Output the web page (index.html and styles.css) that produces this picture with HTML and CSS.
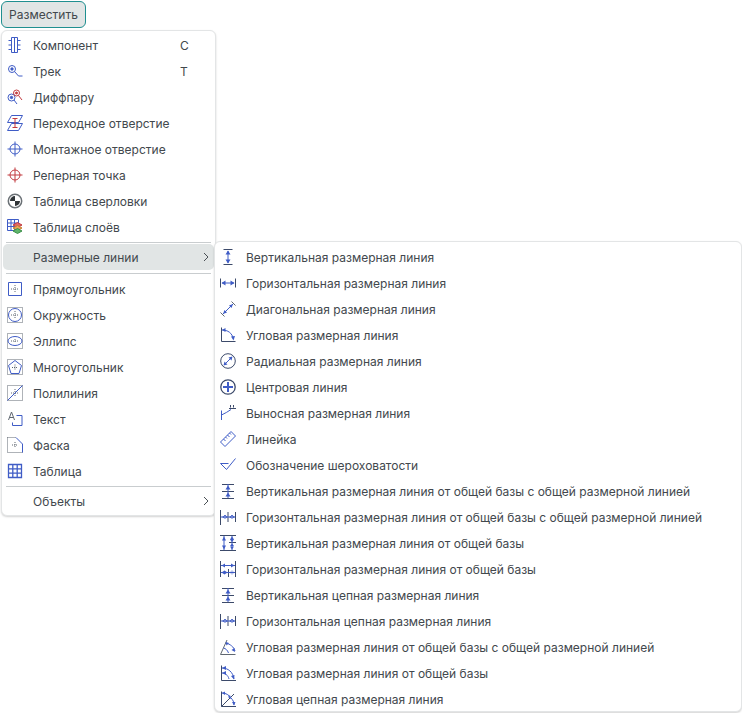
FILE: index.html
```html
<!DOCTYPE html>
<html lang="ru">
<head>
    <meta charset="UTF-8">
    <title>Разместить</title>
    <link rel="stylesheet" href="styles.css">
</head>
<body>

    <button class="menu-button">Разместить</button>

    <div class="menu">
        <div class="menu-item">
            <svg class="icon" viewBox="0 0 16 16"><path d="M4.500 .5h6v15h-6zM4.500 3.500h-3M4.500 8h-3M4.500 12.500h-3M10.500 3.500h3M10.500 8h3M10.500 12.500h3M7.500 .5v15"/></svg>
            <span class="label">Компонент</span><span class="shortcut">C</span>
        </div>
        <div class="menu-item">
            <svg class="icon" viewBox="0 0 16 16"><circle cx="5" cy="6" r="3.500"/><circle class="fill" cx="5" cy="6" r="1.200"/><path d="M7.500 8.500l4 4.500h4"/></svg>
            <span class="label">Трек</span><span class="shortcut">T</span>
        </div>
        <div class="menu-item">
            <svg class="icon" viewBox="0 0 16 16"><circle cx="4.500" cy="8.500" r="3.500"/><circle class="fill" cx="4.500" cy="8.500" r="1.200"/><path d="M7 11l3 4"/><g class="red"><circle cx="9.500" cy="4" r="3"/><circle class="fill-red" cx="9.500" cy="4" r="1"/><path d="M11.500 6.500l3.500 4.500"/></g></svg>
            <span class="label">Диффпару</span>
        </div>
        <div class="menu-item">
            <svg class="icon" viewBox="0 0 16 16"><path d="M4.500 .5h11l-4 7h-11zM4.500 8.500h11l-4 7h-11z"/><path class="red" d="M5.500 3.500h5M5.500 12.500h5M8 3.500v9"/></svg>
            <span class="label">Переходное отверстие</span>
        </div>
        <div class="menu-item">
            <svg class="icon" viewBox="0 0 16 16"><circle cx="8" cy="8" r="5"/><path d="M8 .5v15M.5 8h15"/></svg>
            <span class="label">Монтажное отверстие</span>
        </div>
        <div class="menu-item">
            <svg class="icon red" viewBox="0 0 16 16"><circle cx="8" cy="8" r="5"/><path d="M8 .5v15M.5 8h15"/></svg>
            <span class="label">Реперная точка</span>
        </div>
        <div class="menu-item">
            <svg class="icon dark" viewBox="0 0 16 16"><circle class="ring" cx="8" cy="8" r="6.700"/><path class="solid" d="M8 8V3a5 5 0 0 0-5 5zM8 8v5a5 5 0 0 0 5-5z"/></svg>
            <span class="label">Таблица сверловки</span>
        </div>
        <div class="menu-item">
            <svg class="icon" viewBox="0 0 16 16"><path d="M.5 .5h11v11H.5zM.5 4h11M.5 7.500h11M4 .5v11M7.500 .5v11"/><path class="layer-red" d="M6 6l4.500-2.500L15 6l-4.500 2.500z"/><path class="layer-orange" d="M6 9l4.500-2.500L15 9l-4.500 2.500z"/><path class="layer-green" d="M6 12l4.500-2.500L15 12l-4.500 2.500z"/></svg>
            <span class="label">Таблица слоёв</span>
        </div>
        <div class="divider"></div>
        <div class="menu-item active">
            <span class="icon"></span>
            <span class="label">Размерные линии</span>
            <svg class="chevron" viewBox="0 0 8 10"><path d="M2 1l4 4-4 4"/></svg>
        </div>
        <div class="divider"></div>
        <div class="menu-item">
            <svg class="icon" viewBox="0 0 16 16"><path d="M1.500 1.500h13v13h-13z"/><path class="dots" d="M8 4v8M4 8h8"/></svg>
            <span class="label">Прямоугольник</span>
        </div>
        <div class="menu-item">
            <svg class="icon" viewBox="0 0 16 16"><path class="dots" d="M.5 .5h15v15H.5zM8 4v8M4 8h8"/><circle cx="8" cy="8" r="6.500"/></svg>
            <span class="label">Окружность</span>
        </div>
        <div class="menu-item">
            <svg class="icon" viewBox="0 0 16 16"><path class="dots" d="M.5 .5h15v15H.5zM4 8h8M8 6v4"/><ellipse cx="8" cy="8" rx="7" ry="4.500"/></svg>
            <span class="label">Эллипс</span>
        </div>
        <div class="menu-item">
            <svg class="icon" viewBox="0 0 16 16"><path class="dots" d="M.5 .5h15v15H.5zM8 5.500v6M5 8.500h6"/><path d="M8 1.500l6.500 5-2.500 8H4l-2.500-8z"/></svg>
            <span class="label">Многоугольник</span>
        </div>
        <div class="menu-item">
            <svg class="icon" viewBox="0 0 16 16"><path class="dots" d="M.5 .5h15v15H.5zM8 4v8M4 8h8"/><path d="M.5 15.500l15-15"/></svg>
            <span class="label">Полилиния</span>
        </div>
        <div class="menu-item">
            <svg class="icon" viewBox="0 0 16 16"><path class="gray" d="M1.500 9L4.500 1l3 8M2.700 6.500h3.600"/><path d="M9.500 4.500h5.500v10H5.500v-3"/></svg>
            <span class="label">Текст</span>
        </div>
        <div class="menu-item">
            <svg class="icon" viewBox="0 0 16 16"><path class="dots" d="M.5 .5h8.500M.5 .5v15h15V8M8 5v6M5 8h6"/><path d="M9 .5l6.500 6.500v8.500"/></svg>
            <span class="label">Фаска</span>
        </div>
        <div class="menu-item">
            <svg class="icon" viewBox="0 0 16 16"><path class="bold" d="M1.500 1.500h13v13h-13zM1.500 5.800h13M1.500 10.200h13M5.800 1.500v13M10.200 1.500v13"/></svg>
            <span class="label">Таблица</span>
        </div>
        <div class="divider"></div>
        <div class="menu-item">
            <span class="icon"></span>
            <span class="label">Объекты</span>
            <svg class="chevron" viewBox="0 0 8 10"><path d="M2 1l4 4-4 4"/></svg>
        </div>
    </div>

    <div class="menu submenu">
        <div class="menu-item">
            <svg class="icon" viewBox="0 0 16 16"><path class="dark" d="M3.500 .5h9M3.500 15.500h9"/><path d="M8 2v12"/><path class="solid" d="M8 1.500l-2.500 4h5zM8 14.500l-2.500-4h5z"/></svg>
            <span class="label">Вертикальная размерная линия</span>
        </div>
        <div class="menu-item">
            <svg class="icon" viewBox="0 0 16 16"><path class="dark" d="M.5 3.500v9M15.500 3.500v9"/><path d="M2 8h12"/><path class="solid" d="M1.500 8l4-2.500v5zM14.500 8l-4-2.500v5z"/></svg>
            <span class="label">Горизонтальная размерная линия</span>
        </div>
        <div class="menu-item">
            <svg class="icon" viewBox="0 0 16 16"><path class="gray" d="M.5 11.500l4 4M11.500 .5l4 4"/><path d="M3 13L13 3"/><path class="solid" d="M3 13l1.500-4 2.500 2.500zM13 3l-4 1.500L11.500 7z"/></svg>
            <span class="label">Диагональная размерная линия</span>
        </div>
        <div class="menu-item">
            <svg class="icon" viewBox="0 0 16 16"><path class="dark" d="M1.500 .5v14h14"/><path d="M2 3c6 0 10 3 11.500 9"/><path class="solid" d="M5.500 1l-3.500 2 3.500 2zM11 9.500l2.500 4 1.500-4.500z"/></svg>
            <span class="label">Угловая размерная линия</span>
        </div>
        <div class="menu-item">
            <svg class="icon" viewBox="0 0 16 16"><circle class="dark" cx="8" cy="8" r="7.300"/><path d="M4.500 11.500l7-7"/><path class="solid" d="M3.500 12.500l1-4 3 3zM12.500 3.500l-4 1 3 3z"/></svg>
            <span class="label">Радиальная размерная линия</span>
        </div>
        <div class="menu-item">
            <svg class="icon" viewBox="0 0 16 16"><circle class="dark thin" cx="8" cy="8" r="7.200"/><path class="thick" d="M8 3v10M3 8h10"/></svg>
            <span class="label">Центровая линия</span>
        </div>
        <div class="menu-item">
            <svg class="icon" viewBox="0 0 16 16"><path d="M1.500 15V5.500M1.500 10C5 8.500 8 6.500 11 4.500"/><path class="dark" d="M10.500 0v2.500M13.500 0v2.500M9 3.500h7"/></svg>
            <span class="label">Выносная размерная линия</span>
        </div>
        <div class="menu-item">
            <svg class="icon" viewBox="0 0 16 16"><path d="M.5 11l10.500-10.500 4.500 4.500L5 15.500zM3.500 8l2 2M5.500 6l1.500 1.500M7.500 4l2 2M9.500 2l1.500 1.500"/></svg>
            <span class="label">Линейка</span>
        </div>
        <div class="menu-item">
            <svg class="icon" viewBox="0 0 16 16"><path d="M.5 6.500h8M.5 6.500l6 6 9-11"/></svg>
            <span class="label">Обозначение шероховатости</span>
        </div>
        <div class="menu-item">
            <svg class="icon" viewBox="0 0 16 16"><path class="dark" d="M2 1.500h12M2 8.500h12M2 15.500h12"/><path d="M8 1v14"/><path class="solid" d="M8 2.500L5.500 6.500h5zM8 9.500l-2.500 4h5z"/></svg>
            <span class="label">Вертикальная размерная линия от общей базы с общей размерной линией</span>
        </div>
        <div class="menu-item">
            <svg class="icon" viewBox="0 0 16 16"><path class="dark" d="M.5 1v15M8 3v10M15.500 3v10"/><path d="M1 8h14"/><path class="solid" d="M2 8l3.500-2v4zM8 8L4.500 6v4zM9 8l3.500-2v4zM15 8l-3.500-2v4z"/></svg>
            <span class="label">Горизонтальная размерная линия от общей базы с общей размерной линией</span>
        </div>
        <div class="menu-item">
            <svg class="icon" viewBox="0 0 16 16"><path class="dark" d="M0 .5h16M9 7.500h7M0 15.500h16"/><path d="M4 1v14M12 1v14"/><path class="solid" d="M4 1.500L2 5.500h4zM4 14.500l-2-4h4zM12 1.500l-2 3h4zM12 7l-2-2.500h4zM12 8.500l-2 2.500h4zM12 14.500l-2-3h4z"/></svg>
            <span class="label">Вертикальная размерная линия от общей базы</span>
        </div>
        <div class="menu-item">
            <svg class="icon" viewBox="0 0 16 16"><path class="dark" d="M.5 0v16M8.500 8v8M15.500 0v16"/><path d="M1 4.500h14M1 11.500h14"/><path class="solid" d="M1.500 4.500l3.500-2v4zM14.500 4.500l-3.500-2v4zM1.500 11.500l3-2v4zM7.500 11.500l-3-2v4zM9.500 11.500l3-2v4zM14.500 11.500l-3-2v4z"/></svg>
            <span class="label">Горизонтальная размерная линия от общей базы</span>
        </div>
        <div class="menu-item">
            <svg class="icon" viewBox="0 0 16 16"><path class="dark" d="M2 1.500h12M2 8.500h12M2 15.500h12"/><path d="M8 1v14"/><path class="solid" d="M8 2.500L5.500 6.500h5zM8 9.500l-2.500 4h5z"/></svg>
            <span class="label">Вертикальная цепная размерная линия</span>
        </div>
        <div class="menu-item">
            <svg class="icon" viewBox="0 0 16 16"><path class="dark" d="M.5 1v15M8 3v10M15.500 3v10"/><path d="M1 8h14"/><path class="solid" d="M2 8l3.500-2v4zM8 8L4.500 6v4zM9 8l3.500-2v4zM15 8l-3.500-2v4z"/></svg>
            <span class="label">Горизонтальная цепная размерная линия</span>
        </div>
        <div class="menu-item">
            <svg class="icon" viewBox="0 0 16 16"><path class="gray" d="M.5 15.500h15M.5 15.500L7 1"/><path d="M6 4c4 1 8 4 9 8M3.500 9c2 .5 4 2 5 5"/><path class="solid" d="M5.500 3l1 3.500 2.500-2.500zM15 13l-3.500-2 3-2z"/></svg>
            <span class="label">Угловая размерная линия от общей базы с общей размерной линией</span>
        </div>
        <div class="menu-item">
            <svg class="icon" viewBox="0 0 16 16"><path class="dark" d="M1.500 .5v15h14.500"/><path d="M2 3c6 0 11 4 12 11M2 8c3 0 6 2 7 6"/><path class="solid" d="M6 1L2 3l4 2zM14 14.500l-3-3.500 3.500-1zM6 6L2 8l4 2z"/></svg>
            <span class="label">Угловая размерная линия от общей базы</span>
        </div>
        <div class="menu-item">
            <svg class="icon" viewBox="0 0 16 16"><path class="dark" d="M1.500 .5v15h14.500M1.500 15.500L14 3"/><path d="M2 2c4 0 7 2 9 5M11 7c2 2 3 4 3 7"/><path class="solid" d="M5 .5L2 2l3 2zM11 8L8 6l2-2zM14 14.500l-2-3.500h3.500z"/></svg>
            <span class="label">Угловая цепная размерная линия</span>
        </div>
    </div>

</body>
</html>
```

FILE: styles.css
```css
body {
    margin: 0;
    height: 713px;
    position: relative;
    overflow: hidden;
    background-color: #fff;
    font-family: Inter, sans-serif;
    font-size: 12px;
    color: #42484d;
}
.menu-button {
    display: block;
    margin: 1px 0 0 1px;
    width: 85px;
    height: 27px;
    padding: 0;
    font-family: inherit;
    font-size: 12px;
    color: #42484d;
    background-color: #e1e5e5;
    border: 1px solid #1f8f90;
    border-radius: 6px;
}
.menu {
    position: absolute;
    left: 1px;
    top: 30px;
    width: 211px;
    padding: 1px 1px 1px;
    background-color: #fff;
    border: 1px solid #e3e5e6;
    border-radius: 6px;
    box-shadow: 0 1px 2px rgba(0, 0, 0, 0.18);
}
.submenu {
    left: 214px;
    top: 241px;
    width: 524px;
    height: 466px;
    padding: 2px 1px 1px;
}
.menu-item {
    display: flex;
    align-items: center;
    height: 26px;
    padding: 0 4px;
    border-radius: 5px;
    white-space: nowrap;
}
.menu-item.active {
    background-color: #e1e5e5;
}
.label {
    flex: 1;
    margin-left: 10px;
}
.shortcut {
    width: 30px;
}
.icon {
    flex: none;
    width: 16px;
    height: 16px;
    fill: none;
    stroke: #3f5cc6;
    stroke-width: 1;
}
.chevron {
    flex: none;
    width: 8px;
    height: 10px;
    fill: none;
    stroke: #4a5055;
}
.icon .red, .icon.red {
    stroke: #c23a3f;
}
.icon .fill {
    fill: #3f5cc6;
}
.icon .fill-red {
    fill: #c23a3f;
}
.icon .dark, .icon.dark {
    stroke: #3c4a6a;
}
.icon .gray {
    stroke: #5f6770;
}
.icon .solid {
    fill: #3f5cc6;
    stroke: none;
}
.icon.dark .solid {
    fill: #2f3437;
}
.icon .ring {
    stroke: #6b7176;
    stroke-width: 1.5;
}
.icon .thick {
    stroke-width: 2;
}
.icon .bold {
    stroke-width: 1.3;
}
.icon .thin {
    stroke-width: 1.3;
}
.icon .dots {
    stroke: #5f6770;
    stroke-dasharray: 1 1;
}
.icon .layer-red {
    fill: #e0686b;
    stroke: #c23a3f;
}
.icon .layer-orange {
    fill: #e9a45a;
    stroke: #c77f2e;
}
.icon .layer-green {
    fill: #5fb56b;
    stroke: #3a8f48;
}
.divider {
    height: 1px;
    margin: 2px 3px 1px;
    background-color: #c9cdcf;
}
.active + .divider {
    margin: 3px 3px 2px;
}
```
